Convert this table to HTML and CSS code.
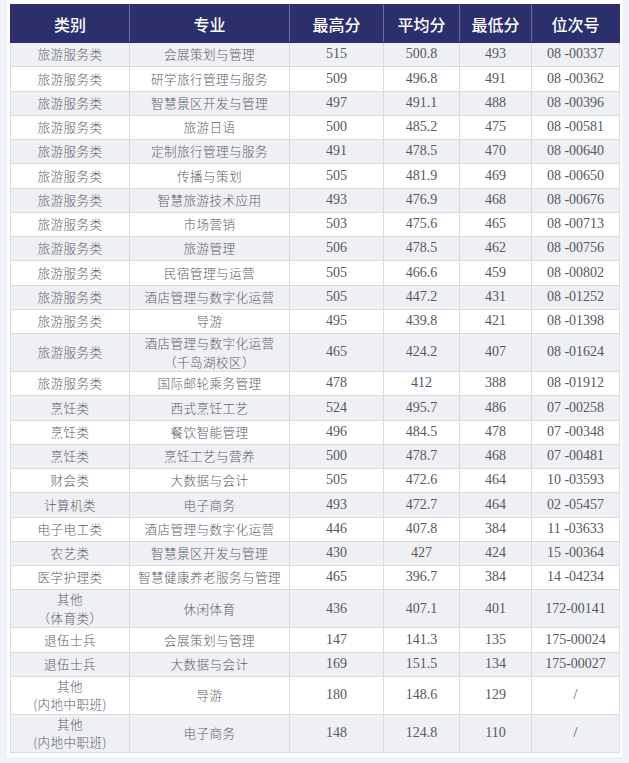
FILE: index.html
```html
<!DOCTYPE html>
<html lang="zh">
<head>
<meta charset="utf-8">
<title>录取分数</title>
<link rel="stylesheet" href="styles.css">
</head>
<body>
<div class="card">
<table class="tbl">
<colgroup>
<col class="c1"><col class="c2"><col class="c3"><col class="c4"><col class="c5"><col class="c6">
</colgroup>
<thead>
<tr><th>类别</th><th>专业</th><th>最高分</th><th>平均分</th><th>最低分</th><th>位次号</th></tr>
</thead>
<tbody>
<tr><td class="zh">旅游服务类</td><td class="zh">会展策划与管理</td><td>515</td><td>500.8</td><td>493</td><td>08 -00337</td></tr>
<tr><td class="zh">旅游服务类</td><td class="zh">研学旅行管理与服务</td><td>509</td><td>496.8</td><td>491</td><td>08 -00362</td></tr>
<tr><td class="zh">旅游服务类</td><td class="zh">智慧景区开发与管理</td><td>497</td><td>491.1</td><td>488</td><td>08 -00396</td></tr>
<tr><td class="zh">旅游服务类</td><td class="zh">旅游日语</td><td>500</td><td>485.2</td><td>475</td><td>08 -00581</td></tr>
<tr><td class="zh">旅游服务类</td><td class="zh">定制旅行管理与服务</td><td>491</td><td>478.5</td><td>470</td><td>08 -00640</td></tr>
<tr><td class="zh">旅游服务类</td><td class="zh">传播与策划</td><td>505</td><td>481.9</td><td>469</td><td>08 -00650</td></tr>
<tr><td class="zh">旅游服务类</td><td class="zh">智慧旅游技术应用</td><td>493</td><td>476.9</td><td>468</td><td>08 -00676</td></tr>
<tr><td class="zh">旅游服务类</td><td class="zh">市场营销</td><td>503</td><td>475.6</td><td>465</td><td>08 -00713</td></tr>
<tr><td class="zh">旅游服务类</td><td class="zh">旅游管理</td><td>506</td><td>478.5</td><td>462</td><td>08 -00756</td></tr>
<tr><td class="zh">旅游服务类</td><td class="zh">民宿管理与运营</td><td>505</td><td>466.6</td><td>459</td><td>08 -00802</td></tr>
<tr><td class="zh">旅游服务类</td><td class="zh">酒店管理与数字化运营</td><td>505</td><td>447.2</td><td>431</td><td>08 -01252</td></tr>
<tr><td class="zh">旅游服务类</td><td class="zh">导游</td><td>495</td><td>439.8</td><td>421</td><td>08 -01398</td></tr>
<tr class="dbl"><td class="zh">旅游服务类</td><td class="zh">酒店管理与数字化运营<br>（千岛湖校区）</td><td>465</td><td>424.2</td><td>407</td><td>08 -01624</td></tr>
<tr><td class="zh">旅游服务类</td><td class="zh">国际邮轮乘务管理</td><td>478</td><td>412</td><td>388</td><td>08 -01912</td></tr>
<tr><td class="zh">烹饪类</td><td class="zh">西式烹饪工艺</td><td>524</td><td>495.7</td><td>486</td><td>07 -00258</td></tr>
<tr><td class="zh">烹饪类</td><td class="zh">餐饮智能管理</td><td>496</td><td>484.5</td><td>478</td><td>07 -00348</td></tr>
<tr><td class="zh">烹饪类</td><td class="zh">烹饪工艺与营养</td><td>500</td><td>478.7</td><td>468</td><td>07 -00481</td></tr>
<tr><td class="zh">财会类</td><td class="zh">大数据与会计</td><td>505</td><td>472.6</td><td>464</td><td>10 -03593</td></tr>
<tr><td class="zh">计算机类</td><td class="zh">电子商务</td><td>493</td><td>472.7</td><td>464</td><td>02 -05457</td></tr>
<tr><td class="zh">电子电工类</td><td class="zh">酒店管理与数字化运营</td><td>446</td><td>407.8</td><td>384</td><td>11 -03633</td></tr>
<tr><td class="zh">农艺类</td><td class="zh">智慧景区开发与管理</td><td>430</td><td>427</td><td>424</td><td>15 -00364</td></tr>
<tr><td class="zh">医学护理类</td><td class="zh">智慧健康养老服务与管理</td><td>465</td><td>396.7</td><td>384</td><td>14 -04234</td></tr>
<tr class="dbl"><td class="zh">其他<br>（体育类）</td><td class="zh">休闲体育</td><td>436</td><td>407.1</td><td>401</td><td>172-00141</td></tr>
<tr><td class="zh">退伍士兵</td><td class="zh">会展策划与管理</td><td>147</td><td>141.3</td><td>135</td><td>175-00024</td></tr>
<tr><td class="zh">退伍士兵</td><td class="zh">大数据与会计</td><td>169</td><td>151.5</td><td>134</td><td>175-00027</td></tr>
<tr class="dbl"><td class="zh">其他<br>(内地中职班)</td><td class="zh">导游</td><td>180</td><td>148.6</td><td>129</td><td>/</td></tr>
<tr class="dbl"><td class="zh">其他<br>(内地中职班)</td><td class="zh">电子商务</td><td>148</td><td>124.8</td><td>110</td><td>/</td></tr>
</tbody>
</table>
</div>
</body>
</html>
```
FILE: styles.css
```css
html, body {
  margin: 0;
  padding: 0;
}
body {
  background: #eff2f9;
  width: 629px;
  height: 763px;
  overflow: hidden;
}
.card {
  margin-left: 7px;
  width: 609px;
  padding: 4px 3px 4px 3px;
  background: #ffffff;
}
.tbl {
  width: 609px;
  border-collapse: collapse;
  table-layout: fixed;
  font-family: "Liberation Serif", "Noto Sans CJK SC", serif;
  font-size: 14px;
  color: #55585d;
}
.c1 { width: 119px; }
.c2 { width: 160px; }
.c3 { width: 94px; }
.c4 { width: 76px; }
.c5 { width: 72px; }
.c6 { width: 88px; }
.tbl th {
  background: #2c2f6c;
  color: #ffffff;
  font-family: "Noto Sans CJK SC", sans-serif;
  font-weight: 500;
  font-size: 16px;
  height: 37px;
  padding: 0;
  text-align: center;
  vertical-align: middle;
  border: 1px solid #2c2f6c;
  border-left-color: #6a6d98;
  border-right-color: #6a6d98;
}
.tbl th:first-child { border-left-color: #2c2f6c; }
.tbl th:last-child { border-right-color: #2c2f6c; }
.tbl td {
  height: 23.26px;
  padding: 0 2px;
  text-align: center;
  vertical-align: middle;
  line-height: 18.5px;
  border: 1px solid #d8dbe0;
  white-space: nowrap;
}
.tbl td.zh {
  font-family: "Noto Sans CJK SC", sans-serif;
  font-size: 12.6px;
  font-weight: 300;
  letter-spacing: 0.4px;
  color: #5d6065;
}
.tbl tr.dbl td {
  height: 37px;
}
.tbl tbody tr:nth-child(odd) td {
  background: #eff0f3;
}
.tbl tbody tr:nth-child(even) td {
  background: #ffffff;
}
```
